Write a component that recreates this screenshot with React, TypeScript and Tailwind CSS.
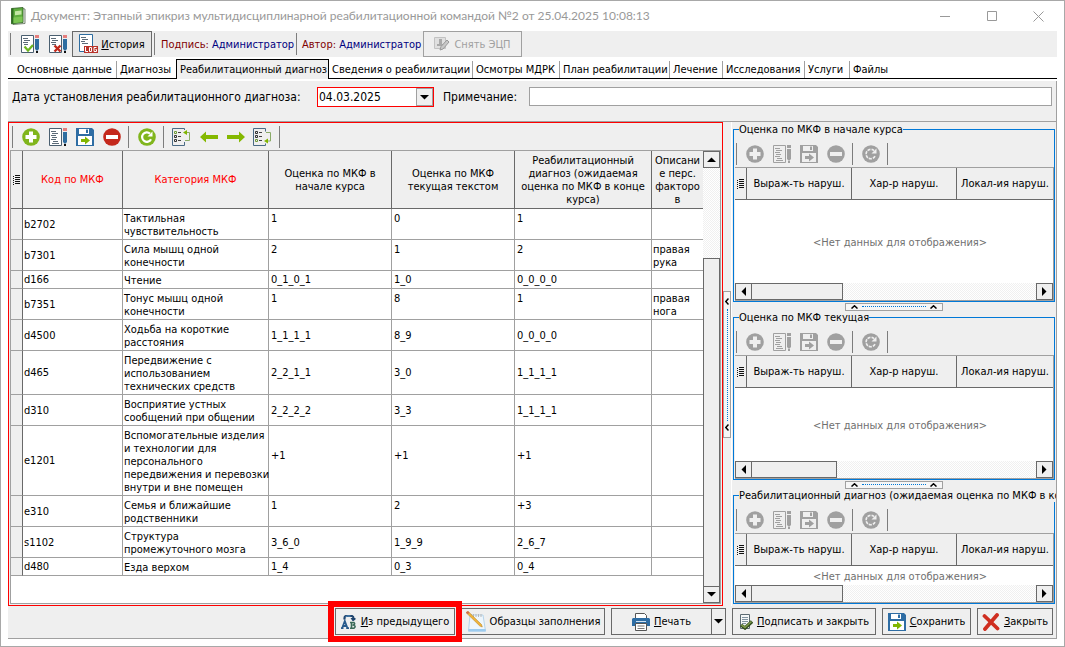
import type { ReactNode } from "react";

const BookIcon = () => (
  <svg width="16" height="18" viewBox="0 0 16 18" aria-hidden="true">
    <path d="M12 1.500 15 2v14.500L3 17.500z" fill="#e9efe6" stroke="#5a6b55" strokeWidth=".8" />
    <path d="M1.500 1.500 13 .5v15L1.500 16.800z" fill="#5fae3f" stroke="#2d5c22" strokeWidth=".8" />
    <path d="M1.500 1.500 3.500 1.300v15.200L1.500 16.800z" fill="#2f6d22" />
    <path d="M5 4.200 11.500 3.600v4L5 8.200z" fill="#c3e6a4" />
    <path d="M3.500 10.500 12.500 9.500v5.600L3.500 16.200z" fill="#7cc653" />
  </svg>
);

const EditBase = ({ off, dense }: { off?: boolean; dense?: boolean }) => (
  <>
    <path d="M.5.5h12v17H.5z" fill={off ? "none" : "#fff"} stroke={off ? "#a0a0a0" : "#4a5f70"} />
    <path
      d={dense ? "M2 3.500h5M3 5.500h6M2 7.500h5M3 9.500h5M2 11.500h5M4 13.500h5M3 15.500h7" : "M2 3.500h5M3 5.500h6M2 7.500h5M3 9.500h4"}
      stroke={off ? "#a0a0a0" : "#5c6b78"}
      fill="none"
    />
  </>
);

const Pencil = ({ off = false }: { off?: boolean }) => (
  <>
    <path d="M14 0h4v3h-4z" fill={off ? "#a0a0a0" : "#e57f7d"} />
    <path d="M14 4h4v10l-2 2-2-2z" fill={off ? "#a0a0a0" : "#2e6da0"} />
    <path d="M15 16h2v2h-2z" fill={off ? "#a0a0a0" : "#111"} />
  </>
);

const DocCheckIcon = () => (
  <svg width="18" height="18" viewBox="0 0 18 18" aria-hidden="true">
    <EditBase />
    <Pencil />
    <path d="M3.500 11.500 7 15.500l5-5.500" fill="none" stroke="#6cb521" strokeWidth="2.200" />
  </svg>
);

const DocCrossIcon = () => (
  <svg width="18" height="18" viewBox="0 0 18 18" aria-hidden="true">
    <EditBase />
    <Pencil />
    <path d="M5.500 10.500l6 6M11.500 10.500l-6 6" fill="none" stroke="#c0291c" strokeWidth="2.400" />
  </svg>
);

const LogIcon = () => (
  <svg width="20" height="20" viewBox="0 0 20 20" aria-hidden="true">
    <path d="M.5.5h13v17H.5z" fill="#fff" stroke="#2e6da0" />
    <path d="M2 3.500h5M3 5.500h6M2 7.500h4M3 9.500h6" stroke="#5c6b78" fill="none" />
    <path d="M5 12h14v7H5z" fill="#b8322a" />
    <path d="M6.500 13v4.500h2.500M10.500 13.500h2v4h-2zM17.500 13.500H15v4h2.500v-2H16.500" fill="none" stroke="#fff" />
  </svg>
);

const SignOffIcon = () => (
  <svg width="16" height="16" viewBox="0 0 16 16" aria-hidden="true">
    <path d="M.5 1.500h11v11H.5z" fill="#e0e0e0" stroke="#c2c2c2" />
    <path d="M5 3h3v5H5zM3 8h7v2H3z" fill="#a9a9a9" />
    <path d="M7 10.500 13 4l2 2-6 7-3 1z" fill="#c8c8c8" stroke="#999" />
  </svg>
);

const AddIcon = ({ off }: { off?: boolean }) => (
  <svg width="18" height="18" viewBox="0 0 18 18" aria-hidden="true">
    <circle cx="9" cy="9" r="8.800" fill={off ? "#a0a0a0" : "#80b51c"} />
    <path d="M7 3.500h4V7h3.500v4H11v3.500H7V11H3.500V7H7z" fill={off ? "#efefef" : "#fff"} />
  </svg>
);

const EditIcon = ({ off }: { off?: boolean }) => (
  <svg width="18" height="18" viewBox="0 0 18 18" aria-hidden="true">
    <EditBase off={off} dense />
    <Pencil off={off} />
  </svg>
);

const SaveIcon = ({ off }: { off?: boolean }) => (
  <svg width="18" height="18" viewBox="0 0 18 18" aria-hidden="true">
    <path d="M0 0h16l2 2v16H0z" fill={off ? "#a0a0a0" : "#2e6da4"} />
    <path d="M3 1h10v5H3z" fill={off ? "#efefef" : "#fff"} />
    <path d="M10 1.500h2V5h-2z" fill={off ? "#a0a0a0" : "#2e6da4"} />
    <path d="M2 8h14v9H2z" fill={off ? "#efefef" : "#fff"} />
    <path d="M5 11h4V8.500l5 4-5 4V14H5z" fill={off ? "#a0a0a0" : "#80b500"} />
  </svg>
);

const RemoveIcon = ({ off }: { off?: boolean }) => (
  <svg width="18" height="18" viewBox="0 0 18 18" aria-hidden="true">
    <circle cx="9" cy="9" r="8.800" fill={off ? "#a0a0a0" : "#c4281c"} />
    <path d="M3 7h12v4H3z" fill={off ? "#efefef" : "#fff"} />
  </svg>
);

const RefreshIcon = ({ off }: { off?: boolean }) => (
  <svg width="18" height="18" viewBox="0 0 18 18" aria-hidden="true">
    <circle cx="9" cy="9" r="8.800" fill={off ? "#a0a0a0" : "#80b51c"} />
    <path
      d="M13 11.200A4.700 4.700 0 1 1 12 5.600"
      fill="none"
      stroke={off ? "#efefef" : "#fff"}
      strokeWidth={off ? 1.600 : 2.200}
      strokeDasharray={off ? "3 1" : undefined}
    />
    <path d="M14.500 3.500v5H9.500z" fill={off ? "#efefef" : "#fff"} />
  </svg>
);

const ListIcon = ({ up }: { up?: boolean }) => (
  <svg width="19" height="18" viewBox="0 0 19 18" aria-hidden="true">
    <path d={up ? "M12.500 2V.5H.5v17h12V14" : "M12.500 3.500V.5H.5v17h12V15.500"} fill="none" stroke="#4a6a85" />
    <path d="M2.500 3.500h2v2h-2z" fill="none" stroke={up ? "#6f9a3a" : "#333"} />
    <path d="M2.500 7.500h2v2h-2z" fill="none" stroke="#333" />
    <path d="M2.500 11.500h2v2h-2z" fill="none" stroke={up ? "#333" : "#6f9a3a"} />
    <path d="M6 4.500h3M6 8.500h3M6 12.500h3" stroke="#444" />
    {up ? (
      <>
        <path d="M13 4.500h4.500v8H13" fill="none" stroke="#8aab68" />
        <path d="M15 2v5l-4-2.500z" fill="#80b500" />
      </>
    ) : (
      <>
        <path d="M13 4.500h4.500v8.500H14" fill="none" stroke="#8aab68" />
        <path d="M15 10.500v5l-4-2.500z" fill="#80b500" />
      </>
    )}
  </svg>
);

const ArrowIcon = ({ right }: { right?: boolean }) => (
  <svg width="18" height="12" viewBox="0 0 18 12" aria-hidden="true">
    <path d={right ? "M0 4h12V.5L18 6l-6 5.500V8H0z" : "M18 4H6V.5L0 6l6 5.500V8h12z"} fill="#84b800" />
  </svg>
);

const IndicatorIcon = () => (
  <svg width="7" height="10" viewBox="0 0 7 10" className="mx-auto" aria-hidden="true">
    <path d="M0 1.500h1M2 .5h5M0 3.500h1M2 2.500h5M0 5.500h1M2 4.500h5M0 7.500h1M2 6.500h5M0 9.500h1M2 8.500h5" stroke="#111" />
  </svg>
);

const FromPreviousIcon = () => (
  <svg width="16" height="14" viewBox="0 0 16 14" aria-hidden="true">
    <path d="M3.500 4.500V3q0-2 2-2h5q2 0 2 2.500" fill="none" stroke="#20456e" strokeWidth="2.200" />
    <path d="M4.500 2.200Q5 1 6.500 1h3" fill="none" stroke="#5b9bd0" />
    <path d="M9.500 3h5v1.500l-2 1.500h-1z" fill="#20456e" />
    <path d="M1.200 13 3.800 6 6.400 13M2.500 11h3M0 13.200h2.500M5.200 13.200h2.800" fill="none" stroke="#285a8c" strokeWidth="1.800" />
    <path d="M10.500 7.500V13M9 7.500h4q1.500 1.200-.5 2.500 3 1.200.5 3.200H9" fill="none" stroke="#3c6b58" strokeWidth="1.600" />
  </svg>
);

const NotepadIcon = () => (
  <svg width="20" height="21" viewBox="0 0 20 21" aria-hidden="true">
    <path d="M4 4h13l2.500 16H2.500z" fill="#eef6fd" stroke="#b5d3ea" />
    <path d="M5 6V3M7.500 6V3M10 6V3M12.500 6V3M15 6V3" stroke="#b8b8b8" />
    <path d="M2.500 18h17l.3 2.500H2.300z" fill="#9ccbef" />
    <path d="M0 1.500 2 .3l13.500 13.200.8 2.500-2.500-1z" fill="#f0b53c" stroke="#b37a1c" strokeWidth=".5" />
    <path d="M0 1.500 2 .3l1.500 1.500L1.600 3.200z" fill="#cf6a4c" />
  </svg>
);

const PrinterIcon = () => (
  <svg width="18" height="18" viewBox="0 0 18 18" aria-hidden="true">
    <path d="M3.500.5h9l2 2v4h-11z" fill="#fff" stroke="#555" />
    <path d="M1 5h16l1 1v7H0V6z" fill="#2e6da4" />
    <path d="M4 8.500h10" stroke="#cfe2f3" />
    <path d="M3.500 10.500h11v7h-11z" fill="#fff" stroke="#555" />
    <path d="M5.500 13h7M5.500 15.500h7" stroke="#777" />
  </svg>
);

const SignCloseIcon = () => (
  <svg width="14" height="16" viewBox="0 0 14 16" aria-hidden="true">
    <path d="M1.500.5h9v14h-9z" fill="#f4f7f8" stroke="#5c6b73" />
    <path d="M3 3.500h6M3 5.500h6M3 7.500h6M3 9.500h4" stroke="#8193a0" />
    <path d="M2 11l4 3L13 7.500" fill="none" stroke="#2f4a1c" strokeWidth="3.400" />
    <path d="M2.500 11l3.500 2.500L12.500 7.500" fill="none" stroke="#7d9a4c" strokeWidth="1.600" />
  </svg>
);

const CloseIcon = () => (
  <svg width="18" height="18" viewBox="0 0 18 18" aria-hidden="true">
    <path d="M2.500 3 15.500 15.500M15 2 3 16" fill="none" stroke="#cf2e20" strokeWidth="3.800" strokeLinecap="round" />
  </svg>
);

const trianglePaths = {
  up: "M0 7 4.500 2.500 9 7z",
  down: "M0 2h9L4.500 6.500z",
  left: "M7 0v9L2.500 4.500z",
  right: "M2 0v9l4.500-4.500z",
};

const Triangle = ({ dir }: { dir: keyof typeof trianglePaths }) => (
  <svg width="9" height="9" viewBox="0 0 9 9" aria-hidden="true">
    <path d={trianglePaths[dir]} fill="#000" />
  </svg>
);

const Separator = () => <span className="h-[22px] w-px shrink-0 bg-[#7d7d7d]" />;

const ToolButton = ({ label, disabled, children }: { label: string; disabled?: boolean; children: ReactNode }) => (
  <button type="button" aria-label={label} disabled={disabled} className="flex h-6 w-[27px] items-center justify-center">
    {children}
  </button>
);

const EditTools = ({ off }: { off?: boolean }) => (
  <>
    <Separator />
    <div className="flex pr-[3px] pl-1">
      <ToolButton label="Добавить" disabled={off}><AddIcon off={off} /></ToolButton>
      <ToolButton label="Изменить" disabled={off}><EditIcon off={off} /></ToolButton>
      <ToolButton label="Записать" disabled={off}><SaveIcon off={off} /></ToolButton>
      <ToolButton label="Удалить" disabled={off}><RemoveIcon off={off} /></ToolButton>
    </div>
    <Separator />
    <div className="flex pr-[3px] pl-1">
      <ToolButton label="Обновить" disabled={off}><RefreshIcon off={off} /></ToolButton>
    </div>
    <Separator />
  </>
);

const tabs = [
  { name: "Основные данные", width: "w-[109px]" },
  { name: "Диагнозы", width: "w-[59px]" },
  { name: "Реабилитационный диагноз", width: "w-[153px]" },
  { name: "Сведения о реабилитации", width: "w-[144px]" },
  { name: "Осмотры МДРК", width: "w-[87px]" },
  { name: "План реабилитации", width: "w-[110px]" },
  { name: "Лечение", width: "w-[53px]" },
  { name: "Исследования", width: "w-[82px]" },
  { name: "Услуги", width: "w-[45px]" },
  { name: "Файлы", width: "w-[45px]" },
];
const activeTab = 2;

type Row = { code: string; name: string; start: string; now: string; goal: string; note?: string; raised?: boolean };

const rows: Row[] = [
  { code: "b2702", name: "Тактильная\nчувствительность", start: "1", now: "0", goal: "1", raised: true },
  { code: "b7301", name: "Сила мышц одной\nконечности", start: "2", now: "1", goal: "2", note: "правая рука", raised: true },
  { code: "d166", name: "Чтение", start: "0_1_0_1", now: "1_0", goal: "0_0_0_0" },
  { code: "b7351", name: "Тонус мышц одной\nконечности", start: "1", now: "8", goal: "1", note: "правая нога", raised: true },
  { code: "d4500", name: "Ходьба на короткие\nрасстояния", start: "1_1_1_1", now: "8_9", goal: "0_0_0_0" },
  { code: "d465", name: "Передвижение с\nиспользованием\nтехнических средств", start: "2_2_1_1", now: "3_0", goal: "1_1_1_1" },
  { code: "d310", name: "Восприятие устных\nсообщений при общении", start: "2_2_2_2", now: "3_3", goal: "1_1_1_1" },
  { code: "e1201", name: "Вспомогательные изделия\nи технологии для\nперсонального\nпередвижения и перевозки\nвнутри и вне помещен", start: "+1", now: "+1", goal: "+1", raised: true },
  { code: "e310", name: "Семья и ближайшие\nродственники", start: "1", now: "2", goal: "+3", raised: true },
  { code: "s1102", name: "Структура\nпромежуточного мозга", start: "3_6_0", now: "1_9_9", goal: "2_6_7" },
  { code: "d480", name: "Езда верхом", start: "1_4", now: "0_3", goal: "0_4" },
];

const headClass = "border-r border-b border-[#696969] bg-[#efefef] px-px font-normal";
const cellClass = "border-r border-b border-[#a0a0a0] whitespace-pre";

const MainTable = () => (
  <table className="w-full table-fixed border-separate border-spacing-0">
    <colgroup>
      <col className="w-[12px]" />
      <col className="w-[100px]" />
      <col className="w-[146px]" />
      <col className="w-[123px]" />
      <col className="w-[123px]" />
      <col className="w-[137px]" />
      <col />
    </colgroup>
    <thead>
      <tr className="h-[58px]">
        <th className={headClass}><IndicatorIcon /></th>
        <th className={`${headClass} text-[#ff0000]`}>Код по МКФ</th>
        <th className={`${headClass} text-[#ff0000]`}>Категория МКФ</th>
        <th className={headClass}>Оценка по МКФ в<br />начале курса</th>
        <th className={headClass}>Оценка по МКФ<br />текущая текстом</th>
        <th className={headClass}>Реабилитационный<br />диагноз (ожидаемая<br />оценка по МКФ в конце<br />курса)</th>
        <th className="border-b border-[#696969] bg-[#efefef] font-normal">Описани<br />е перс.<br />факторо<br />в</th>
      </tr>
    </thead>
    <tbody>
      {rows.map((row) => {
        const value = `${cellClass} pl-[2px] ${row.raised ? "pt-[3px] pb-[14px]" : "py-[2px]"}`;
        return (
          <tr key={row.code}>
            <td className="border-r border-b border-r-[#696969] border-b-[#a0a0a0] bg-[#efefef]" />
            <td className={`${cellClass} py-[2px] pl-px`}>{row.code}</td>
            <td className={`${cellClass} pt-[3px] pb-px pl-px`}>{row.name}</td>
            <td className={value}>{row.start}</td>
            <td className={value}>{row.now}</td>
            <td className={value}>{row.goal}</td>
            <td className="border-b border-[#a0a0a0] pt-[3px] pb-px pl-px">{row.note}</td>
          </tr>
        );
      })}
    </tbody>
  </table>
);

const trackClass =
  "bg-[conic-gradient(#ffffff_25%,#f0f0f0_0_50%,#ffffff_0_75%,#f0f0f0_0)] bg-size-[2px_2px]";
const scrollButton = "flex h-[17px] w-[17px] shrink-0 items-center justify-center border border-[#696969] bg-[#efefef]";

const HorizontalScroll = ({ thumb }: { thumb: string }) => (
  <div className={`flex ${trackClass}`}>
    <button type="button" aria-label="Влево" className={scrollButton}><Triangle dir="left" /></button>
    <div className={`border border-l-0 border-[#696969] bg-[#efefef] ${thumb}`} />
    <button type="button" aria-label="Вправо" className={`${scrollButton} ml-auto`}><Triangle dir="right" /></button>
  </div>
);

const Group = ({ title, thumb, body }: { title: string; thumb: string; body: string }) => (
  <fieldset className="flex min-w-0 grow flex-col border border-[#0078d7]">
    <legend className="ml-[5px] max-w-[317px] overflow-hidden whitespace-nowrap">{title}</legend>
    <div className="flex h-[31px] items-center pt-1 pl-[2px]">
      <EditTools off />
    </div>
    <div className="ml-px flex grow flex-col border border-l-0 border-[#a0a0a0] bg-white">
      <table className="w-full table-fixed border-separate border-spacing-0">
        <colgroup>
          <col className="w-[12px]" />
          <col className="w-[105px]" />
          <col className="w-[105px]" />
          <col />
        </colgroup>
        <thead>
          <tr className="h-8">
            <th className={headClass}><IndicatorIcon /></th>
            <th className={headClass}>Выраж-ть наруш.</th>
            <th className={headClass}>Хар-р наруш.</th>
            <th className="border-b border-[#696969] bg-[#efefef] font-normal">Локал-ия наруш.</th>
          </tr>
        </thead>
      </table>
      <div className={`flex grow items-center justify-center pt-px pl-3 text-[#707070] ${body}`}>&lt;Нет данных для отображения&gt;</div>
      <HorizontalScroll thumb={thumb} />
    </div>
  </fieldset>
);

const UpChevron = () => (
  <svg width="7" height="4" viewBox="0 0 7 4" aria-hidden="true">
    <path d="M.5 3.500 3.500.8 6.500 3.500" fill="none" stroke="#000" strokeWidth="1.500" />
  </svg>
);

const LeftChevron = () => (
  <svg width="4" height="7" viewBox="0 0 4 7" aria-hidden="true">
    <path d="M3.500.5.8 3.500 3.500 6.500" fill="none" stroke="#000" strokeWidth="1.500" />
  </svg>
);

const GroupSplitter = () => (
  <div className="flex h-[9px] shrink-0 items-center justify-center">
    <div className="flex h-2 w-[98px] items-center justify-between border border-[#a0a0a0] bg-[#f6f6f6] px-[5px]">
      <UpChevron />
      <span className="w-[64px] border-t border-dotted border-[#0078d7]" />
      <UpChevron />
    </div>
  </div>
);

const SideSplitter = () => (
  <div className="flex w-[8px] shrink-0 items-center pt-px">
    <div className="flex h-[147px] w-[8px] flex-col items-center justify-between border border-[#a0a0a0] bg-[#f6f6f6] py-[6px]">
      <LeftChevron />
      <span className="h-[112px] border-l border-dotted border-[#0078d7]" />
      <LeftChevron />
    </div>
  </div>
);

const footerButton = "flex h-[27px] shrink-0 items-center justify-center border border-[#696969] bg-[#efefef] whitespace-nowrap";
const captionButton = "flex h-[30px] w-[47px] items-center justify-center";

export default function App() {
  return (
    <main className="flex min-h-screen flex-col border border-[#a8a8a8] bg-white px-[7px] pb-[7px] font-['DejaVu_Sans_Condensed','DejaVu_Sans',sans-serif] text-[11px] leading-[13px] text-black">
      <header className="flex h-[30px] shrink-0 items-center">
        <div className="ml-[2px]"><BookIcon /></div>
        <h1 className="ml-[5px] font-['Lato','Open_Sans',sans-serif] text-xs whitespace-nowrap text-[#999999]">
          Документ: Этапный эпикриз мультидисциплинарной реабилитационной командой №2 от 25.04.2025 10:08:13
        </h1>
        <div className="-mr-[5px] ml-auto flex">
          <button type="button" aria-label="Свернуть" className={captionButton}>
            <svg width="10" height="10" viewBox="0 0 10 10"><path d="M0 5.500h10" stroke="#999" /></svg>
          </button>
          <button type="button" aria-label="Развернуть" className={captionButton}>
            <svg width="10" height="10" viewBox="0 0 10 10"><path d="M.5.5h9v9h-9z" fill="none" stroke="#999" /></svg>
          </button>
          <button type="button" aria-label="Закрыть окно" className={captionButton}>
            <svg width="11" height="11" viewBox="0 0 11 11"><path d="M.5.5l10 10M10.500.5l-10 10" stroke="#999" /></svg>
          </button>
        </div>
      </header>

      <div className="flex h-[26px] shrink-0 items-center bg-[#efefef] pl-[2px] whitespace-nowrap">
        <Separator />
        <button type="button" aria-label="Подписать документ" className="ml-[5px] flex h-6 w-7 items-center justify-center"><DocCheckIcon /></button>
        <button type="button" aria-label="Отменить подпись" className="flex h-6 w-7 items-center justify-center"><DocCrossIcon /></button>
        <button type="button" className="flex h-[26px] w-[80px] items-center justify-center gap-[2px] border border-[#696969] bg-[#e6e6e6]">
          <LogIcon />
          <span><u>И</u>стория</span>
        </button>
        <span className="ml-[2px] flex"><Separator /></span>
        <p className="w-[141px] pl-[6px] text-[#800000]">Подпись: <span className="text-[#000080]">Администратор</span></p>
        <Separator />
        <p className="w-[126px] pl-[5px] text-[#800000]">Автор: <span className="text-[#000080]">Администратор</span></p>
        <button type="button" disabled className="flex h-[26px] w-[99px] items-center justify-center gap-[4px] border border-[#a0a0a0] text-[#a0a0a0]">
          <SignOffIcon />
          Снять ЭЦП
        </button>
      </div>

      <nav role="tablist" className="mb-[2px] flex h-[22px] shrink-0 items-end border-b border-black">
        {tabs.map((tab, i) => {
          const active = i === activeTab;
          const divided = i !== activeTab - 1 && !active && i !== tabs.length - 1;
          return (
            <button
              key={tab.name}
              type="button"
              role="tab"
              aria-selected={active}
              className={`flex shrink-0 items-center whitespace-nowrap ${tab.width} ${
                active ? "-mb-px h-5 border border-b-0 border-black bg-[#efefef]" : "h-[17px]"
              } ${divided ? "border-r border-[#a0a0a0]" : ""} ${i === 0 ? "pl-[9px]" : "pl-[3px]"}`}
            >
              {tab.name}
            </button>
          );
        })}
      </nav>

      <section className="flex grow flex-col border-r border-b border-[#a0a0a0] bg-[#efefef]">
        <div className="flex h-[41px] shrink-0 border-b border-[#a0a0a0] pt-[6px] pr-[4px] pl-[4px] leading-5 whitespace-nowrap">
          <label htmlFor="date" className="w-[305px] text-xs leading-5">Дата установления реабилитационного диагноза:</label>
          <div className="flex h-5 w-[117px] border border-[#ff0000] bg-white">
            <input id="date" defaultValue="04.03.2025" className="min-w-0 flex-1 pl-px text-xs outline-none" />
            <button type="button" aria-label="Выбрать дату" className="flex w-[17px] items-center justify-center border border-[#a0a0a0] bg-[#efefef]">
              <Triangle dir="down" />
            </button>
          </div>
          <label htmlFor="note" className="ml-[9px] w-[86px] text-xs leading-5">Примечание:</label>
          <input id="note" className="h-[19px] min-w-0 flex-1 border border-[#a0a0a0] bg-white px-1 text-xs outline-none" />
        </div>

        <div className="flex grow">
          <div className="flex min-w-0 flex-1 flex-col border border-[#ff0000] p-px">
            <div className="flex h-[26px] items-center pl-[2px]">
              <EditTools />
              <div className="flex pr-[3px] pl-1">
                <ToolButton label="В начало"><ListIcon up /></ToolButton>
                <ToolButton label="Назад"><ArrowIcon /></ToolButton>
                <ToolButton label="Вперёд"><ArrowIcon right /></ToolButton>
                <ToolButton label="В конец"><ListIcon /></ToolButton>
              </div>
              <Separator />
            </div>
            <div className="flex grow border border-[#a0a0a0] bg-white">
              <div className="min-w-0 flex-1"><MainTable /></div>
              <div className={`flex w-[17px] shrink-0 flex-col ${trackClass}`}>
                <button type="button" aria-label="Вверх" className={scrollButton}><Triangle dir="up" /></button>
                <div className="mt-[90px] grow border border-b-0 border-[#696969] bg-[#efefef]" />
                <button type="button" aria-label="Вниз" className={scrollButton}><Triangle dir="down" /></button>
              </div>
            </div>
          </div>
          <SideSplitter />
          <aside className="flex w-[325px] shrink-0 flex-col border-l border-white pt-px pr-px pb-[2px] pl-px">
            <Group title="Оценка по МКФ в начале курса" thumb="w-[91px]" body="min-h-[83px]" />
            <GroupSplitter />
            <Group title="Оценка по МКФ текущая" thumb="w-[85px]" body="min-h-[73px]" />
            <GroupSplitter />
            <Group title="Реабилитационный диагноз (ожидаемая оценка по МКФ в конце курса)" thumb="w-[91px]" body="min-h-[19px]" />
          </aside>
        </div>

        <footer className="flex h-8 shrink-0 items-start justify-end gap-[6px] pt-[2px] pr-[3px]">
          <div className="relative">
            <button type="button" className={`${footerButton} w-[120px] gap-1`}>
              <FromPreviousIcon />
              <span><u>И</u>з предыдущего</span>
            </button>
            <div className="pointer-events-none absolute -inset-[7px] z-10 border-[6px] border-[#ff0000]" />
          </div>
          <button type="button" className={`${footerButton} w-[144px] gap-1`}>
            <NotepadIcon />
            Образцы заполнения
          </button>
          <div className="flex">
            <button type="button" className={`${footerButton} w-[101px] gap-1`}>
              <PrinterIcon />
              <span><u>П</u>ечать</span>
            </button>
            <button type="button" aria-label="Варианты печати" className={`${footerButton} w-[14px] border-l-0`}>
              <Triangle dir="down" />
            </button>
          </div>
          <button type="button" className={`${footerButton} w-[144px] gap-1`}>
            <SignCloseIcon />
            <span><u>П</u>одписать и закрыть</span>
          </button>
          <button type="button" className={`${footerButton} w-[89px] gap-1`}>
            <SaveIcon />
            <span><u>С</u>охранить</span>
          </button>
          <button type="button" className={`${footerButton} w-[76px] gap-1`}>
            <CloseIcon />
            <span><u>З</u>акрыть</span>
          </button>
        </footer>
      </section>
    </main>
  );
}
